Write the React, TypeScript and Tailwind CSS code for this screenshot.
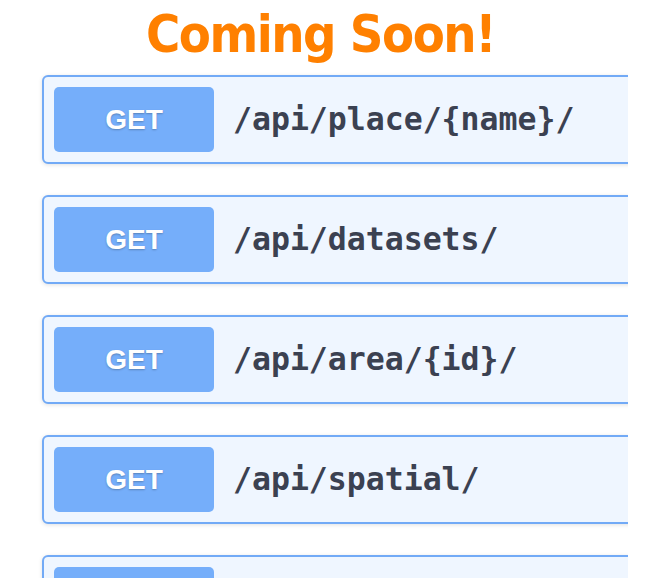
import React from 'react'

const endpoints = ['/api/place/{name}/', '/api/datasets/', '/api/area/{id}/', '/api/spatial/']

const Endpoint: React.FC<{ path?: string }> = ({ path }) => (
  <div className="ml-[42px] w-[620px] h-[89px] shrink-0 flex items-center gap-[19px] px-[10px] rounded-[6px] border-2 border-[#72aaf6] bg-[#eff6ff] shadow-[0_1px_4px_rgba(0,0,0,0.12)]">
    <div className="w-[160px] h-[65px] shrink-0 rounded-[5px] bg-[#75aefa] flex items-center justify-center">
      {path && (
        <span
          className="text-white text-[28px] font-bold [text-shadow:0_1px_2px_rgba(0,0,0,0.25)]"
          style={{ fontFamily: '"Liberation Sans", Arial, sans-serif' }}
        >
          GET
        </span>
      )}
    </div>
    {path && (
      <span
        className="text-[#3b4151] text-[31.5px] font-bold whitespace-nowrap"
        style={{ fontFamily: '"DejaVu Sans Mono", monospace' }}
      >
        {path}
      </span>
    )}
  </div>
)

export default function App() {
  return (
    <div className="w-[664px] h-[578px] bg-white overflow-hidden">
      <div className="w-[628px] h-[578px] overflow-hidden flex flex-col">
        <div className="w-[641px] h-[75px] shrink-0 text-center">
          <h1
            className="text-[#ff8000] text-[52px] font-bold leading-none pt-[8px] tracking-[-1.5px]"
            style={{ fontFamily: '"Liberation Sans Narrow", "DejaVu Sans Condensed", sans-serif' }}
          >
            Coming Soon!
          </h1>
        </div>
        <div className="flex flex-col gap-[31px]">
          {endpoints.map((p) => (
            <Endpoint key={p} path={p} />
          ))}
          <Endpoint />
        </div>
      </div>
    </div>
  )
}
